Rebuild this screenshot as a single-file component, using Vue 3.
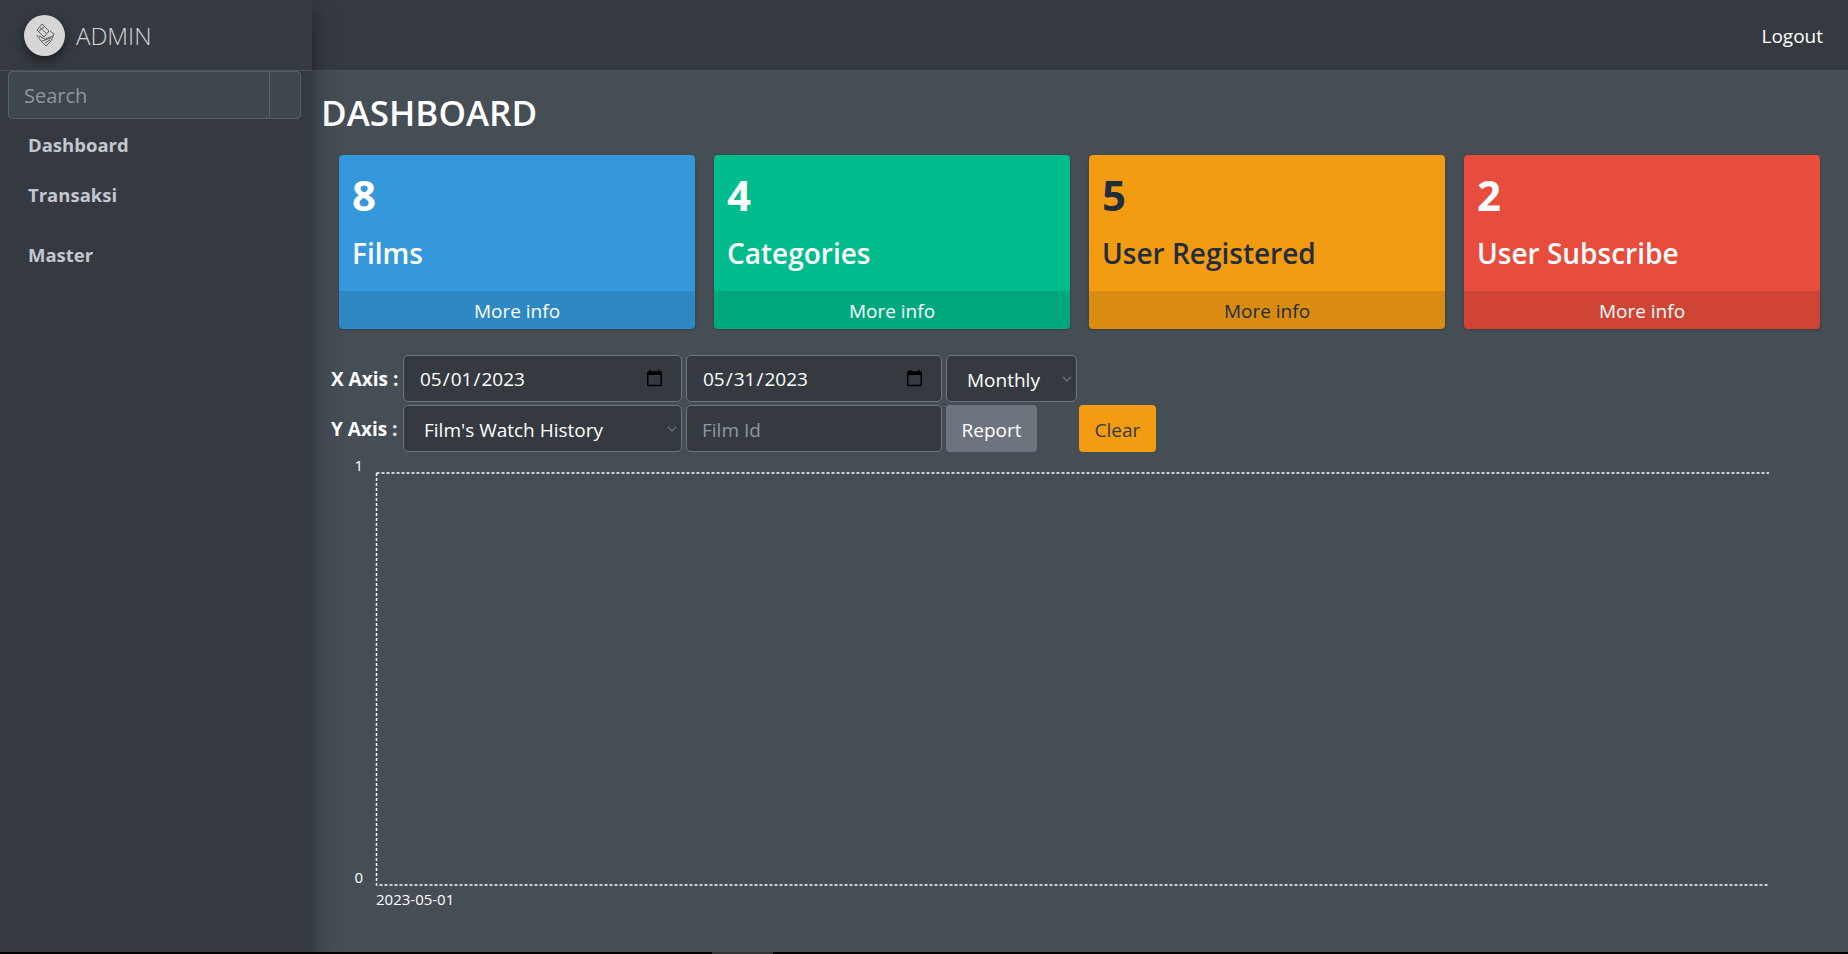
<template>
  <div class="layout">
    <aside class="sidebar">
      <div class="brand">
        <span class="brand-logo">
          <svg width="20" height="26" viewBox="0 0 20 26" fill="none" stroke="#5c6064" stroke-width="1">
            <path d="M7 2 L2 8 L9 15 L14 9 Z" />
            <path d="M5 5.5 L11 11 M4 9 L9 5" />
            <path d="M2 13 L6 19 L11 24 L16 19 L19 12 L15 9" />
            <path d="M4 14 L10 17 L18 14 M7 19 L16 16 M10 21 L15 18" />
          </svg>
        </span>
        <span class="brand-text">ADMIN</span>
      </div>
      <div class="search">
        <input class="search-input" type="text" placeholder="Search" />
        <button class="search-btn" type="button"></button>
      </div>
      <nav class="menu">
        <a v-for="item in menu" :key="item.label" class="menu-item" :style="{ height: item.height + 'px' }">{{ item.label }}</a>
      </nav>
    </aside>

    <div class="main">
      <header class="topbar">
        <a class="logout">Logout</a>
      </header>

      <section class="content">
        <h1 class="title">DASHBOARD</h1>

        <div class="cards">
          <div v-for="card in cards" :key="card.label" class="card" :class="card.kind">
            <div class="card-body">
              <div class="card-num">{{ card.value }}</div>
              <div class="card-label">{{ card.label }}</div>
            </div>
            <a class="card-foot">More info</a>
          </div>
        </div>

        <div class="filters">
          <label class="axis">X Axis :</label>
          <input class="field date" type="date" value="2023-05-01" />
          <input class="field date2" type="date" value="2023-05-31" />
          <select class="field period">
            <option>Monthly</option>
          </select>

          <label class="axis">Y Axis :</label>
          <select class="field metric">
            <option>Film's Watch History</option>
          </select>
          <input class="field film" type="text" placeholder="Film Id" />
          <div class="actions">
            <button class="btn report" type="button">Report</button>
            <button class="btn clear" type="button">Clear</button>
          </div>
        </div>

        <svg class="chart" width="1440" height="450" viewBox="0 0 1440 450">
          <text x="42" y="16" class="tick">1</text>
          <text x="42" y="428" class="tick">0</text>
          <path d="M55.5 18 H1448 M55.5 18 V430 H1448" fill="none" stroke="#fff" stroke-width="1.5" stroke-dasharray="3 2" />
          <text x="55" y="450" class="tick date-tick">2023-05-01</text>
        </svg>
      </section>
    </div>

    <div class="edge"><span class="edge-tab"></span></div>
  </div>
</template>

<script setup>
const menu = [
  { label: 'Dashboard', height: 50 },
  { label: 'Transaksi', height: 50 },
  { label: 'Master', height: 70 }
]

const cards = [
  { value: 8, label: 'Films', kind: 'blue' },
  { value: 4, label: 'Categories', kind: 'green' },
  { value: 5, label: 'User Registered', kind: 'amber' },
  { value: 2, label: 'User Subscribe', kind: 'red' }
]
</script>

<style>
body {
  overflow: hidden;
}
</style>

<style scoped>
.layout {
  position: relative;
  display: flex;
  width: 1848px;
  height: 954px;
  overflow: hidden;
  font-family: "Open Sans", "Noto Sans", sans-serif;
  font-size: 19px;
  color: #fff;
  background: #454d55;
}

.sidebar {
  width: 312px;
  flex: none;
  background: #343a40;
  box-shadow: 0 14px 28px rgba(0, 0, 0, 0.25), 0 10px 10px rgba(0, 0, 0, 0.22);
  z-index: 2;
}

.brand {
  display: flex;
  align-items: center;
  padding-left: 24px;
  gap: 11px;
  border-bottom: 1px solid #4b545c;
  box-sizing: border-box;
  height: 71px;
}

.brand-logo {
  width: 41px;
  height: 41px;
  border-radius: 50%;
  background: #d6d6d6;
  display: flex;
  align-items: center;
  justify-content: center;
  box-shadow: 0 4px 8px rgba(0, 0, 0, 0.3), 0 6px 12px rgba(0, 0, 0, 0.2);
}

.brand-text {
  font-size: 24px;
  font-weight: 300;
  color: rgba(255, 255, 255, 0.8);
}

.search {
  display: flex;
  margin: 0 8px;
  width: 293px;
  height: 48px;
  border: 1px solid #56606a;
  border-radius: 4px;
  background: #3f474e;
  box-sizing: border-box;
}

.search-input {
  flex: 1;
  min-width: 0;
  border: none;
  background: none;
  outline: none;
  padding: 0 15px;
  font: inherit;
  font-size: 20px;
  color: #fff;
}

.search-input::placeholder {
  color: #8f979e;
}

.search-btn {
  width: 31px;
  background: none;
  border: none;
  border-left: 1px solid #56606a;
}

.menu-item {
  display: flex;
  align-items: center;
  padding-left: 28px;
  font-size: 18.5px;
  font-weight: 700;
  color: #c2c7d0;
}

.main {
  flex: 1;
  min-width: 0;
}

.topbar {
  display: flex;
  align-items: center;
  justify-content: flex-end;
  height: 71px;
  padding: 2px 25px 0 0;
  box-sizing: border-box;
  background: #343a40;
  border-bottom: 1px solid #4b545c;
}

.logout {
  color: #fff;
}

.content {
  padding: 20px 0 0 9px;
}

.title {
  margin: 0;
  font-size: 35px;
  font-weight: 600;
  line-height: 44px;
  height: 64px;
}

.cards {
  display: grid;
  grid-template-columns: repeat(4, 356px);
  gap: 19px;
  margin-left: 18px;
}

.card {
  height: 174px;
  display: flex;
  flex-direction: column;
  border-radius: 4px;
  overflow: hidden;
  box-shadow: 0 0 1px rgba(0, 0, 0, 0.125), 0 1px 3px rgba(0, 0, 0, 0.2);
}

.card-body {
  flex: 1;
  padding: 14px 13px 0;
}

.card-num {
  font-size: 42px;
  font-weight: 700;
  line-height: 52px;
}

.card-label {
  margin-top: 12px;
  font-size: 28px;
  font-weight: 600;
  line-height: 40px;
}

.card-foot {
  height: 38px;
  box-sizing: border-box;
  padding-top: 1px;
  display: flex;
  align-items: center;
  justify-content: center;
  background: rgba(0, 0, 0, 0.1);
  color: #fff;
}

.blue {
  background: #3498db;
}

.green {
  background: #00bc8c;
}

.amber {
  background: #f39c12;
  color: #1f2d3d;
}

.amber .card-foot {
  color: #1f2d3d;
}

.red {
  background: #e74c3c;
}

.filters {
  display: grid;
  grid-template-columns: 68px 279px 256px 131px;
  grid-auto-rows: 47px;
  gap: 3px 4px;
  align-items: center;
  margin: 26px 0 0 10px;
  width: 760px;
}

.axis {
  font-weight: 700;
  white-space: nowrap;
}

.field {
  height: 47px;
  box-sizing: border-box;
  width: 100%;
  border: 1px solid #6c757d;
  border-radius: 5px;
  background-color: #343a40;
  color: #fff;
  font: inherit;
  padding: 0 15px;
  outline: none;
}

.film {
  padding-top: 2px;
}

.field::placeholder {
  color: #8f979e;
}

select.field {
  appearance: none;
  padding: 2px 20px 0;
  background-image: url("data:image/svg+xml,%3Csvg xmlns='http://www.w3.org/2000/svg' width='10' height='6' viewBox='0 0 10 6'%3E%3Cpath d='M1 1l4 4 4-4' fill='none' stroke='%236c757d' stroke-width='1.2'/%3E%3C/svg%3E");
  background-repeat: no-repeat;
  background-position: right 4px center;
}

.actions {
  display: flex;
  gap: 42px;
  align-items: flex-start;
  height: 47px;
}

.btn {
  flex: none;
  height: 47px;
  border: none;
  border-radius: 4px;
  font: inherit;
  padding: 2px 0 0;
}

.report {
  width: 91px;
  background: #6c757d;
  color: #fff;
}

.clear {
  width: 77px;
  background: #f39c12;
  color: #343a40;
}

.chart {
  display: block;
  margin: 3px 0 0 0;
  overflow: visible;
}

.tick {
  fill: #fff;
  font-size: 15px;
  text-anchor: end;
}

.date-tick {
  text-anchor: start;
}

.edge {
  position: absolute;
  left: 0;
  right: 0;
  bottom: 0;
  height: 2px;
  background: #000;
  z-index: 3;
}

.edge-tab {
  position: absolute;
  left: 712px;
  width: 61px;
  height: 2px;
  background: #333;
}
</style>
